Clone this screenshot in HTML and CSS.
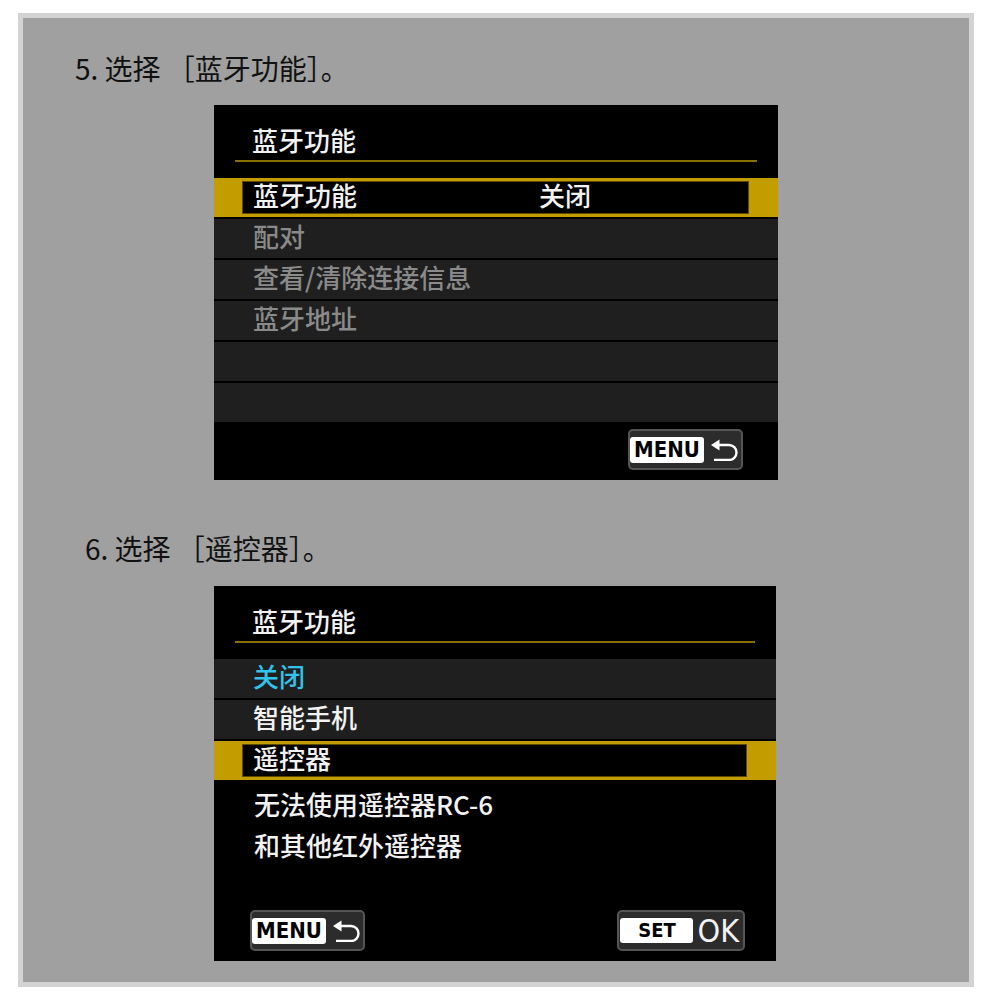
FILE: index.html
```html
<!DOCTYPE html>
<html lang="zh-CN">
<head>
    <meta charset="UTF-8">
    <meta name="viewport" content="width=device-width, initial-scale=1.0">
    <title>蓝牙功能设置</title>
    <link rel="stylesheet" href="styles.css">
</head>
<body>
    <div class="frame">
        <h2 class="step-title step-first">5. 选择 ［蓝牙功能］。</h2>
        <div class="screen">
            <div class="screen-title">蓝牙功能</div>
            <div class="rule"></div>
            <ul class="menu">
                <li class="item selected"><div class="item-box"><span class="item-name">蓝牙功能</span><span>关闭</span></div></li>
                <li class="item dim">配对</li>
                <li class="item dim">查看/清除连接信息</li>
                <li class="item dim">蓝牙地址</li>
                <li class="item"></li>
                <li class="item"></li>
            </ul>
            <div class="screen-foot foot-right">
                <span class="key">
                    <span class="key-label">MENU</span>
                    <svg class="back-icon" width="28" height="22" viewBox="0 0 28 22"><path d="M1 6 L9.5 0.5 L9.5 11.5 Z" fill="#fff"/><path d="M9 6 H19 A7.5 7.5 0 0 1 19 21 H4" fill="none" stroke="#fff" stroke-width="2.4"/></svg>
                </span>
            </div>
        </div>

        <h2 class="step-title step-second">6. 选择 ［遥控器］。</h2>
        <div class="screen screen-narrow">
            <div class="screen-title">蓝牙功能</div>
            <div class="rule"></div>
            <ul class="menu">
                <li class="item current">关闭</li>
                <li class="item">智能手机</li>
                <li class="item selected"><div class="item-box">遥控器</div></li>
            </ul>
            <div class="note">
                <p>无法使用遥控器RC-6</p>
                <p>和其他红外遥控器</p>
            </div>
            <div class="screen-foot">
                <span class="key">
                    <span class="key-label">MENU</span>
                    <svg class="back-icon" width="28" height="22" viewBox="0 0 28 22"><path d="M1 6 L9.5 0.5 L9.5 11.5 Z" fill="#fff"/><path d="M9 6 H19 A7.5 7.5 0 0 1 19 21 H4" fill="none" stroke="#fff" stroke-width="2.4"/></svg>
                </span>
                <span class="key key-set">
                    <span class="key-label">SET</span>
                    <span class="key-ok">OK</span>
                </span>
            </div>
        </div>
    </div>
</body>
</html>
```

FILE: styles.css
```css
body {
    margin: 0;
    background: #fff;
    font-family: "Noto Sans CJK SC", sans-serif;
}
.frame {
    box-sizing: border-box;
    width: 956px;
    height: 974px;
    margin: 13px 0 0 18px;
    border: 5px solid #d3d3d3;
    background: #a0a0a0;
    overflow: hidden;
}
.step-title {
    margin: 0;
    font-size: 28px;
    font-weight: 400;
    line-height: 36px;
    color: #111;
}
.step-first {
    margin: 32px 0 19px 52px;
}
.step-second {
    margin: 50px 0 20px 62px;
}
.screen {
    box-sizing: border-box;
    width: 564px;
    height: 375px;
    margin-left: 191px;
    background: #000;
    display: flex;
    flex-direction: column;
}
.screen-narrow {
    width: 562px;
}
.screen-title {
    padding: 17px 0 0 38px;
    font-size: 26px;
    font-weight: 500;
    line-height: 35px;
    color: #f2f2f2;
}
.rule {
    height: 2px;
    margin: 3px 21px 0;
    background: #8a7000;
}
.menu {
    list-style: none;
    margin: 16px 0 0;
    padding: 0;
    display: flex;
    flex-direction: column;
    gap: 2px;
}
.item {
    box-sizing: border-box;
    height: 39px;
    padding-left: 39px;
    background: #1f1f1f;
    font-size: 26px;
    font-weight: 500;
    line-height: 33px;
    color: #f2f2f2;
}
.item.dim {
    color: #8a8a8a;
}
.item.current {
    color: #33c2ea;
}
.item.selected {
    padding: 3px 29px 3px 28px;
    background: #c39c00;
}
.item-box {
    box-sizing: border-box;
    height: 33px;
    padding-left: 10px;
    border: 1px solid #5c4a00;
    background: #000;
    line-height: 25px;
    display: flex;
}
.item-name {
    width: 286px;
}
.note {
    padding: 3px 0 0 40px;
    font-size: 26px;
    font-weight: 500;
    line-height: 41px;
    color: #f2f2f2;
}
.note p {
    margin: 0;
}
.screen-foot {
    margin-top: auto;
    padding: 0 31px 10px 36px;
    display: flex;
    justify-content: space-between;
}
.foot-right {
    justify-content: flex-end;
    padding-right: 35px;
}
.key {
    box-sizing: border-box;
    height: 41px;
    padding: 0 3px 0 0;
    border: 2px solid #555;
    border-radius: 5px;
    background: #2c2c2c;
    display: inline-flex;
    align-items: center;
    gap: 6px;
}
.key-label {
    width: 74px;
    height: 26px;
    border-radius: 3px;
    background: #fff;
    color: #000;
    font-family: "DejaVu Sans Condensed", "DejaVu Sans", sans-serif;
    font-stretch: condensed;
    font-size: 22px;
    font-weight: 700;
    line-height: 26px;
    text-align: center;
}
.key-set {
    padding: 0 4px 0 1px;
    gap: 4px;
}
.key-set .key-label {
    width: 73px;
    height: 25px;
    font-size: 20px;
    line-height: 25px;
}
.key-ok {
    color: #f2f2f2;
    font-family: "Liberation Sans Narrow", "DejaVu Sans Condensed", sans-serif;
    font-size: 32px;
    line-height: 36px;
}
.back-icon {
    display: block;
}
```
